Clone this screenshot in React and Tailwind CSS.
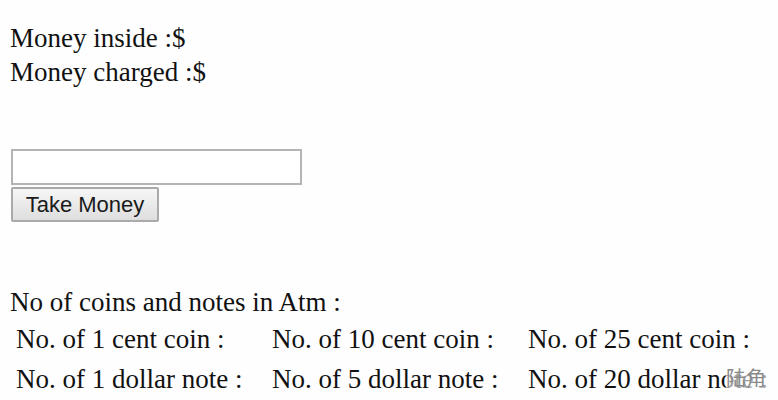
import React from "react";

const cells = [
  "No. of 1 cent coin :",
  "No. of 10 cent coin :",
  "No. of 25 cent coin :",
  "No. of 1 dollar note :",
  "No. of 5 dollar note :",
  "No. of 20 dollar note :",
];

export default function App() {
  return (
    <div className="relative w-[778px] h-[400px] overflow-hidden bg-[#fefefe] text-[#111111] font-['Liberation_Serif','Times_New_Roman',serif] text-[27px] leading-[34px] pl-[10px] pt-[21px]">
      <div>Money inside :$</div>
      <div>Money charged :$</div>

      <div className="mt-[60px] ml-[1px] flex flex-col items-start">
        <input
          type="text"
          className="w-[291px] h-[36px] border-2 border-[#b4b4b4] bg-white outline-none"
        />
        <button className="mt-[2px] w-[148px] h-[35px] border-2 border-[#aaaaaa] rounded-[2px] bg-gradient-to-b from-[#f6f6f6] to-[#dedede] font-['Liberation_Sans',Arial,sans-serif] text-[22px] leading-none text-[#1a1a1a]">
          Take Money
        </button>
      </div>

      <div className="mt-[63px]">No of coins and notes in Atm :</div>
      <div className="grid grid-cols-[256px_256px_256px] pl-[6px] leading-[40px]">
        {cells.map((c) => (
          <div key={c} className="whitespace-nowrap">
            {c}
          </div>
        ))}
      </div>

      <div className="absolute left-[726px] top-[368px] text-[20px] leading-none text-[#8a8a8a] bg-[#fefefe]/60 font-['Noto_Sans_CJK_SC',sans-serif]">
        陆角
      </div>
    </div>
  );
}
